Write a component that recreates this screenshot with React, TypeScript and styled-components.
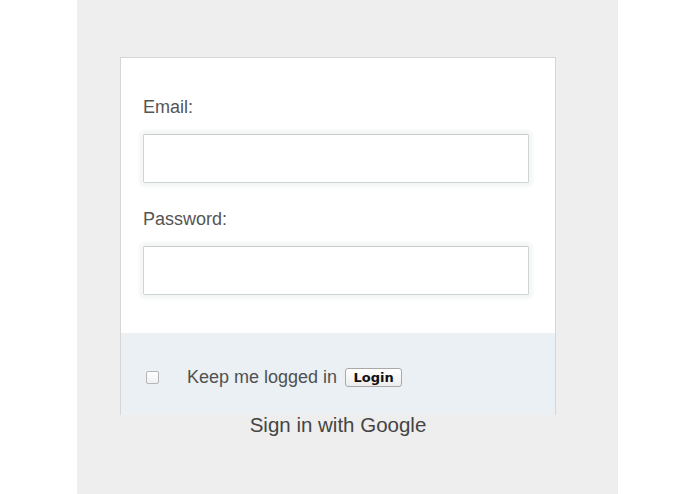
import React from 'react'
import styled, { createGlobalStyle } from 'styled-components'

const GlobalStyle = createGlobalStyle`
  html, body {
    margin: 0;
    padding: 0;
    background: #ffffff;
  }
  body {
    font-family: "Liberation Sans", Arial, sans-serif;
  }
`

const Page = styled.div`
  width: 541px;
  height: 494px;
  margin: 0 auto;
  background: #eeeeee;
  padding: 57px 0 0 43px;
  box-sizing: border-box;
  overflow: hidden;
`

const Card = styled.div`
  width: 436px;
  height: 358px;
  box-sizing: border-box;
  background: #ffffff;
  border: 1px solid #d6d6d6;
  border-bottom: none;
  display: flex;
  flex-direction: column;
`

const Fields = styled.div`
  padding: 38px 26px 38px 22px;
  display: flex;
  flex-direction: column;
`

const Label = styled.label`
  font-size: 18px;
  line-height: 22px;
  color: #555555;
  margin-bottom: 16px;
`

const Input = styled.input`
  display: block;
  width: 100%;
  height: 49px;
  box-sizing: border-box;
  margin: 0 0 25px;
  border: 1px solid #cdd4d3;
  border-top-color: #c4cbca;
  border-radius: 2px;
  background: #ffffff;
  box-shadow: 0 0 3px 4px #f4f7f6;
  outline: none;

  &:last-child {
    margin-bottom: 0;
  }
`

const Footer = styled.div`
  flex: 1;
  background: #eaf0f4;
  padding: 34px 0 0 25px;
  display: flex;
  align-items: flex-start;
`

const Row = styled.div`
  display: flex;
  align-items: center;
  height: 20px;
`

const Check = styled.span`
  width: 11px;
  height: 11px;
  border: 1px solid #b4b6b8;
  border-radius: 2px;
  background: linear-gradient(#ffffff, #eef0f2);
  margin-right: 28px;
`

const KeepText = styled.span`
  font-size: 18px;
  line-height: 20px;
  color: #505050;
  margin-right: 8px;
`

const LoginButton = styled.button`
  width: 57px;
  height: 19px;
  padding: 1px 0 0;
  border: 1px solid #a9a9a9;
  border-radius: 3px;
  background: linear-gradient(#ffffff, #ededed);
  font-family: "DejaVu Sans", "Liberation Sans", sans-serif;
  font-size: 13px;
  font-weight: 600;
  color: #111111;
  line-height: 16px;
`

const GoogleLink = styled.div`
  width: 436px;
  text-align: center;
  font-size: 20.5px;
  line-height: 24px;
  color: #444444;
  margin-top: -2px;
`

export default function App() {
  return (
    <>
      <GlobalStyle />
      <Page>
        <Card>
          <Fields>
            <Label>Email:</Label>
            <Input type="text" />
            <Label>Password:</Label>
            <Input type="password" />
          </Fields>
          <Footer>
            <Row>
              <Check />
              <KeepText>Keep me logged in</KeepText>
              <LoginButton>Login</LoginButton>
            </Row>
          </Footer>
        </Card>
        <GoogleLink>Sign in with Google</GoogleLink>
      </Page>
    </>
  )
}
